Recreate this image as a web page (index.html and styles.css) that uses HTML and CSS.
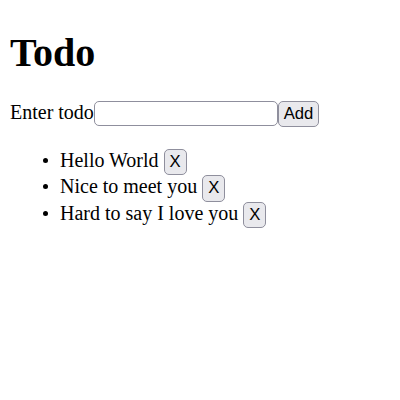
FILE: index.html
```html
<!DOCTYPE html>
<html>
<head>
<meta charset="utf-8">
<link rel="stylesheet" href="styles.css">
</head>
<body class="page">
<h1 class="title">Todo</h1>
<form class="todo-form"><label class="todo-label" for="todo">Enter todo</label><input class="todo-input" id="todo" type="text"><button class="btn" type="button">Add</button></form>
<ul class="todo-list">
<li class="todo-item">Hello World <button class="btn" type="button">X</button></li>
<li class="todo-item">Nice to meet you <button class="btn" type="button">X</button></li>
<li class="todo-item">Hard to say I love you <button class="btn" type="button">X</button></li>
</ul>
</body>
</html>
```
FILE: styles.css
```css
html {
  zoom: 1.25;
}
.page {
  font-family: "Liberation Serif", serif;
  font-size: 16px;
  color: #000;
  background: #fff;
}
.title {
  font-size: 32px;
  margin: 15px 0 20px;
}
.todo-input {
  box-sizing: border-box;
  width: 147px;
  height: 20px;
  padding: 1px 2px;
  border: 1px solid #8f8f9d;
  border-radius: 4px;
  background: #fff;
  font-family: "Liberation Sans", Arial, sans-serif;
  font-size: 13.333px;
}
.btn {
  box-sizing: border-box;
  height: 21px;
  padding: 1px 4px;
  border: 1px solid #8f8f9d;
  border-radius: 4px;
  background: #e9e9ed;
  color: #000;
  font-family: "Liberation Sans", Arial, sans-serif;
  font-size: 13.333px;
}
.todo-list {
  margin: 17.6px 0 16px;
  padding-left: 40px;
  list-style: none;
}
.todo-item::before {
  content: "";
  display: inline-block;
  width: 4px;
  height: 4px;
  border-radius: 50%;
  background: #000;
  margin-left: -13.6px;
  margin-right: 9.6px;
  vertical-align: 0.2em;
}
```
